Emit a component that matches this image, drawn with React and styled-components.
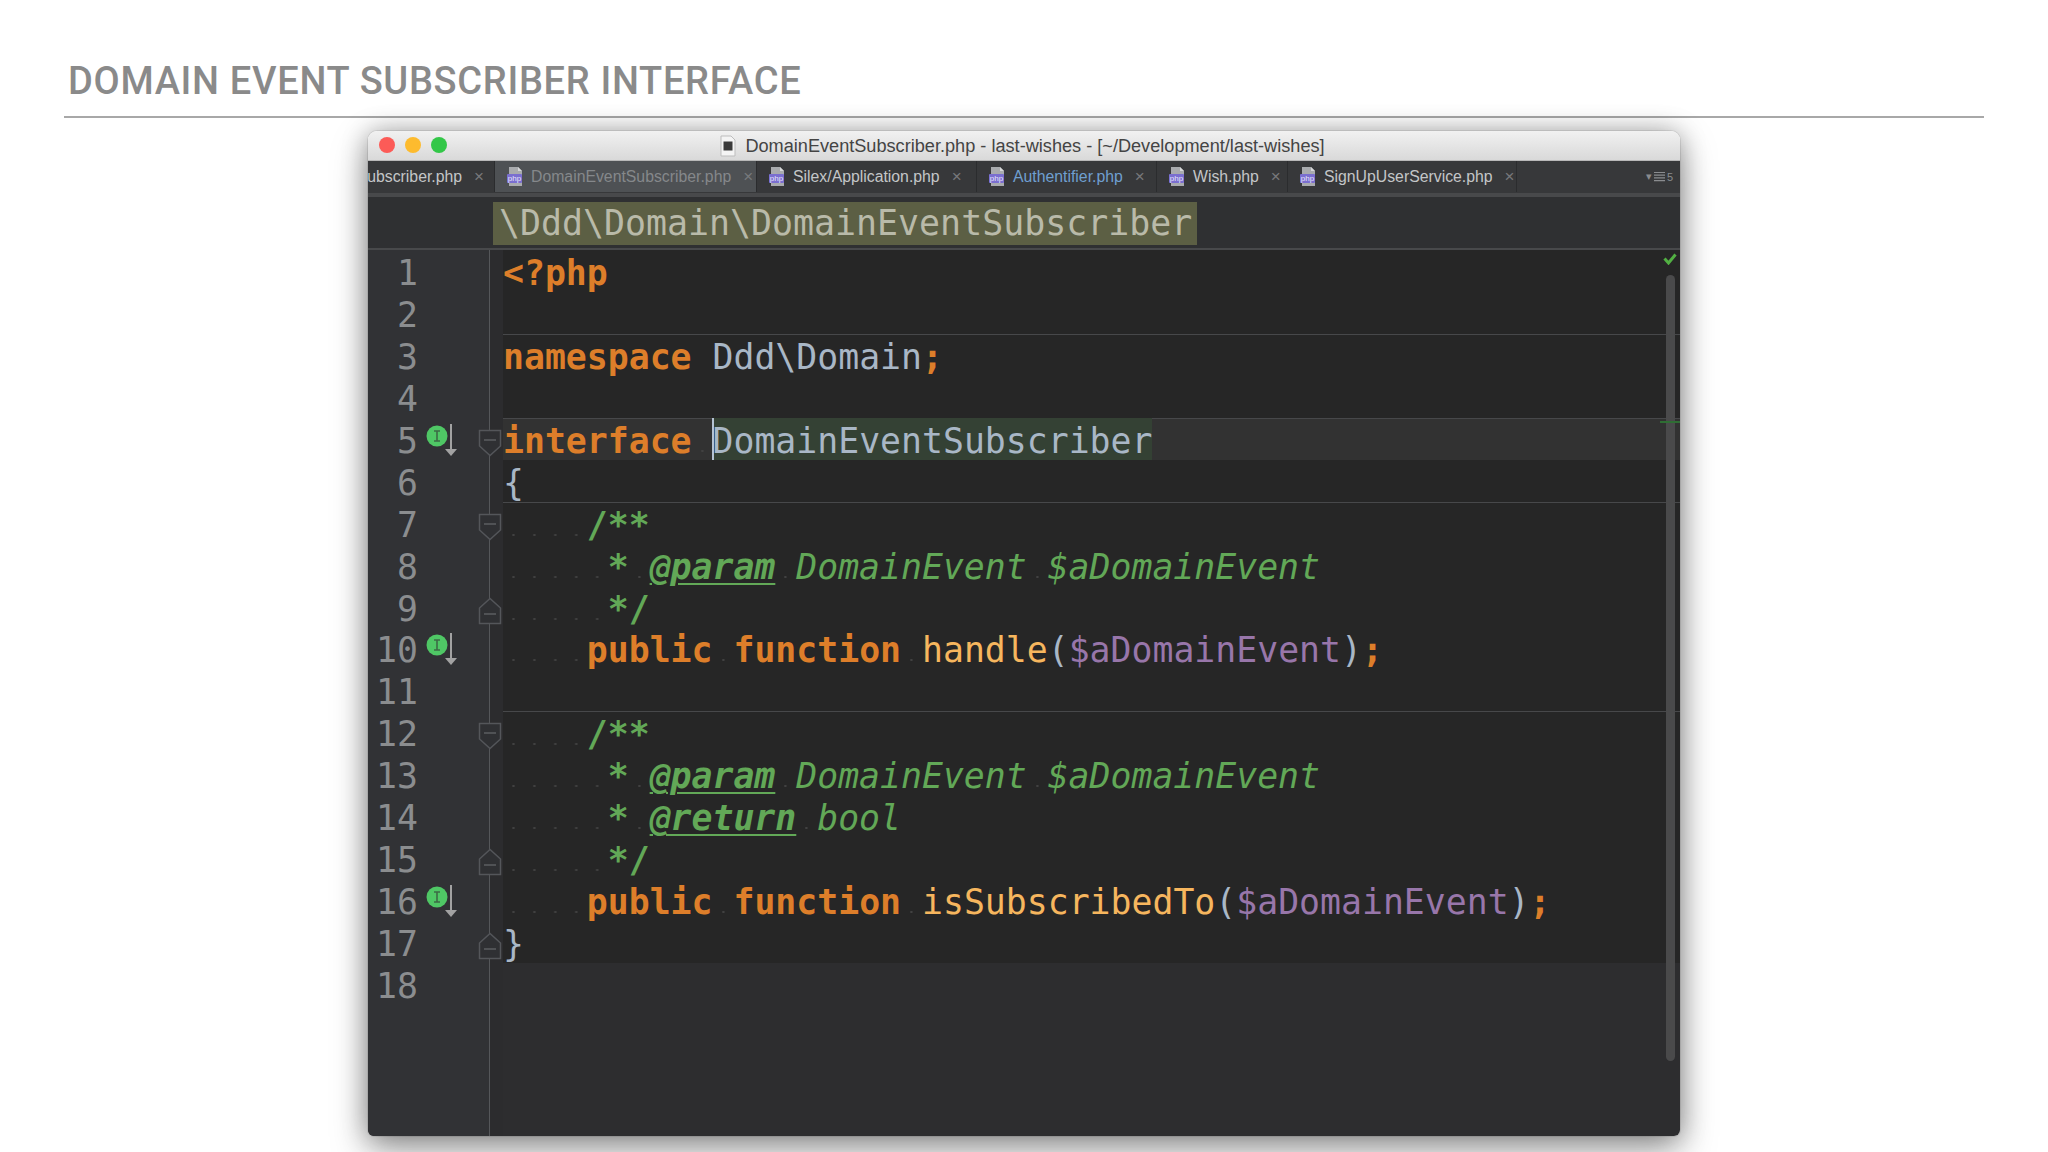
import React from 'react';
import styled, { createGlobalStyle } from 'styled-components';

const mono = `"DejaVu Sans Mono", "Liberation Mono", monospace`;
const ui = `"Liberation Sans", Arial, sans-serif`;

const GlobalStyle = createGlobalStyle`
  html, body {
    margin: 0;
    padding: 0;
    background: #fff;
    overflow: hidden;
  }
`;

const Page = styled.div`
  box-sizing: border-box;
  width: 2048px;
  height: 1152px;
  padding: 0 64px;
  overflow: hidden;
  background: #fff;
`;

const Heading = styled.h1`
  box-sizing: border-box;
  height: 118px;
  margin: 0;
  padding: 58px 0 0 4px;
  border-bottom: 2px solid #a8a8a8;
  font-family: Roboto, "Liberation Sans", sans-serif;
  font-size: 38px;
  line-height: 46px;
  font-weight: 500;
  letter-spacing: 0.7px;
  color: #8a8a8a;
`;

const Window = styled.div`
  display: flex;
  flex-direction: column;
  width: 1312px;
  height: 1005px;
  margin: 13px 0 0 304px;
  border-radius: 9px 9px 6px 6px;
  overflow: hidden;
  box-shadow: 0 0 0 1px rgba(0, 0, 0, 0.08), 0 0 26px rgba(0, 0, 0, 0.28), 0 14px 36px rgba(0, 0, 0, 0.36);
`;

const TitleBar = styled.div`
  position: relative;
  display: flex;
  align-items: center;
  justify-content: center;
  gap: 8px;
  flex: 0 0 30px;
  padding: 1px 4px 0 0;
  background: linear-gradient(#f1f1f1, #d9d9d9);
  border-bottom: 1px solid #b8b8b8;
  box-sizing: border-box;
  font-family: ${ui};
  font-size: 18.15px;
  color: #444444;
`;

const Lights = styled.div`
  position: absolute;
  left: 11px;
  top: 6px;
  display: flex;
  gap: 10px;
`;

const Light = styled.i`
  width: 16px;
  height: 16px;
  border-radius: 50%;
  background: ${(p) => p.$c};
`;

const TabBar = styled.div`
  display: flex;
  flex: 0 0 36px;
  box-sizing: border-box;
  padding-bottom: 1px;
  background: #37383a;
  border-bottom: 4px solid #48494b;
  font-family: ${ui};
  font-size: 15.8px;
`;

const Tab = styled.div`
  display: flex;
  align-items: center;
  justify-content: ${(p) => (p.$cut ? 'flex-end' : 'flex-start')};
  gap: 6px;
  flex: 0 0 ${(p) => p.$w}px;
  box-sizing: border-box;
  padding: 0 10px 0 11px;
  overflow: hidden;
  white-space: nowrap;
  background: ${(p) => (p.$active ? '#4e5154' : 'transparent')};
  border-right: 1px solid #2b2c2e;

  svg {
    flex: 0 0 auto;
  }
`;

const TabName = styled.span`
  color: ${(p) => (p.$active ? '#85888b' : p.$blue ? '#6f9fd0' : '#c4c6c8')};
`;

const TabClose = styled.span`
  margin-left: 6px;
  font-size: 17px;
  color: #77797c;
`;

const TabMore = styled.div`
  display: flex;
  align-items: center;
  gap: 2px;
  margin-left: auto;
  padding-right: 7px;
  font-size: 11px;
  color: #8a8c8f;
`;

const Crumbs = styled.div`
  display: flex;
  align-items: flex-start;
  flex: 0 0 53px;
  box-sizing: border-box;
  padding: 5px 0 0 125px;
  background: #2f3032;
  border-bottom: 2px solid #48494b;
`;

const CrumbMark = styled.div`
  height: 43px;
  padding: 0 5px 0 6px;
  background: #5c5f44;
  font-family: ${mono};
  font-size: 34.9px;
  line-height: 43px;
  color: #b9baa9;
`;

const Editor = styled.div`
  position: relative;
  display: flex;
  flex-direction: column;
  flex: 1;
  background: #2d2d2f;
  font-family: ${mono};
  font-size: 34.8px;
`;

const Row = styled.div`
  display: flex;
  flex: 0 0 41.94px;
  height: 41.94px;
`;

const Filler = styled.div`
  display: flex;
  flex: 1;
`;

const LineNo = styled.div`
  flex: 0 0 50px;
  box-sizing: border-box;
  background: #313235;
  line-height: 46px;
  text-align: right;
  color: #8b8d8f;
`;

const MarkerCell = styled.div`
  flex: 0 0 54px;
  box-sizing: border-box;
  padding: 5px 0 0 8px;
  background: #313235;
`;

const FoldCell = styled.div`
  position: relative;
  flex: 0 0 31px;
  background: linear-gradient(90deg, #313235 18px, #2c2c2e 18px);

  &::before {
    content: '';
    position: absolute;
    left: 17px;
    top: 0;
    bottom: 0;
    width: 1px;
    background: #55575a;
  }
`;

const FoldIcon = styled.svg`
  position: absolute;
  left: 6px;
  top: 11px;
`;

const Code = styled.div`
  flex: 1;
  box-sizing: border-box;
  white-space: pre;
  line-height: 46px;
  color: #a9b7c6;
  background: ${(p) => (p.$blank ? '#2d2d2f' : p.$active ? '#323232' : '#262626')};
  box-shadow: ${(p) => (p.$sep ? 'inset 0 1px 0 #47484a' : 'none')};
`;

const K = styled.span`
  font-weight: 700;
  color: #dd7e2a;
`;

const N = styled.span`
  color: #a9b7c6;
`;

const M = styled.span`
  color: #f6b65e;
`;

const V = styled.span`
  color: #9876aa;
`;

const C = styled.span`
  font-weight: 700;
  color: #62a857;
`;

const Ci = styled.span`
  font-style: italic;
  color: #62a857;
`;

const Tag = styled.span`
  font-style: italic;
  font-weight: 700;
  text-decoration: underline;
  text-underline-offset: 4px;
  text-decoration-thickness: 2px;
  color: #62a857;
`;

const Sp = styled.span`
  display: inline-block;
  width: ${(p) => p.$n}ch;
  height: 41.94px;
  vertical-align: top;
  background-image: radial-gradient(circle, #414141 1px, transparent 1.3px);
  background-size: 1ch 42px;
  background-position: 0 12px;
  background-repeat: repeat-x;
`;

const Current = styled.span`
  display: inline-block;
  height: 41.94px;
  vertical-align: top;
  background: #344134;
  box-shadow: inset 2px 0 0 #b4c2d2;
`;

const CheckMark = styled.svg`
  position: absolute;
  right: 3px;
  top: 3px;
`;

const Scrollbar = styled.div`
  position: absolute;
  right: 5px;
  top: 25px;
  width: 9px;
  height: 786px;
  border-radius: 5px;
  background: #4a4a4b;
`;

const ChangeMark = styled.div`
  position: absolute;
  right: 0;
  top: 171px;
  width: 20px;
  height: 2px;
  background: #2f6e34;
`;

const tabs = [
  { name: 'ubscriber.php', w: 127, cut: true },
  { name: 'DomainEventSubscriber.php', w: 262, active: true },
  { name: 'Silex/Application.php', w: 220 },
  { name: 'Authentifier.php', w: 180, blue: true },
  { name: 'Wish.php', w: 131 },
  { name: 'SignUpUserService.php', w: 229 },
];

const FileIcon = () => (
  <svg width="19" height="21" viewBox="0 0 19 21">
    <path d="M3 1h9l4 4v15H3z" fill="#a9abae" />
    <path d="M12 1v4h4" fill="#d5d6d8" />
    <rect x="1" y="8" width="15" height="9" rx="1" fill="#7a6fd0" />
    <text x="8.5" y="15" fontSize="8" fontFamily={ui} fill="#e8e6fa" textAnchor="middle">php</text>
  </svg>
);

const TitleIcon = () => (
  <svg width="18" height="22" viewBox="0 0 18 22">
    <path d="M2 1h10l4 4v16H2z" fill="#f4f4f4" stroke="#bdbdbd" />
    <rect x="4.5" y="6.5" width="9" height="9" fill="#3a3a3a" />
  </svg>
);

const Marker = () => (
  <svg width="32" height="34" viewBox="0 0 32 34">
    <circle cx="11" cy="13" r="10.5" fill="#4fc765" />
    <path d="M8 8h6M8 18h6M11 8v10" stroke="#3c6b45" strokeWidth="1.6" fill="none" />
    <path d="M25 1v26" stroke="#a2a2a2" strokeWidth="2" />
    <path d="M19 26h12l-6 7z" fill="#a2a2a2" />
  </svg>
);

const Fold = ({ up }) => (
  <FoldIcon width="24" height="28" viewBox="0 0 24 28">
    {up ? (
      <path d="M1.5 26.5V11L12 1.5 22.5 11v15.5z" fill="#2f3033" stroke="#54565a" strokeWidth="1.5" />
    ) : (
      <path d="M1.5 1.5V17L12 26.5 22.5 17V1.5z" fill="#2f3033" stroke="#54565a" strokeWidth="1.5" />
    )}
    <path d={up ? 'M6 17h12' : 'M6 11h12'} stroke="#5c5e62" strokeWidth="1.5" />
  </FoldIcon>
);

const paramLine = (
  <>
    <Sp $n={5} /><C>*</C><Sp $n={1} /><Tag>@param</Tag><Sp $n={1} /><Ci>DomainEvent</Ci><Sp $n={1} /><Ci>$aDomainEvent</Ci>
  </>
);

const lines = [
  { code: <K>{'<?php'}</K> },
  {},
  { sep: true, code: <><K>namespace</K><N> Ddd\Domain</N><K>;</K></> },
  {},
  {
    sep: true, active: true, marker: true, fold: 'down',
    code: <><K>interface</K><Sp $n={1} /><Current>DomainEventSubscriber</Current></>,
  },
  { code: <N>{'{'}</N> },
  { sep: true, fold: 'down', code: <><Sp $n={4} /><C>/**</C></> },
  { code: paramLine },
  { fold: 'up', code: <><Sp $n={5} /><C>*/</C></> },
  {
    marker: true,
    code: <><Sp $n={4} /><K>public</K><Sp $n={1} /><K>function</K><Sp $n={1} /><M>handle</M><N>(</N><V>$aDomainEvent</V><N>)</N><K>;</K></>,
  },
  {},
  { sep: true, fold: 'down', code: <><Sp $n={4} /><C>/**</C></> },
  { code: paramLine },
  { code: <><Sp $n={5} /><C>*</C><Sp $n={1} /><Tag>@return</Tag><Sp $n={1} /><Ci>bool</Ci></> },
  { fold: 'up', code: <><Sp $n={5} /><C>*/</C></> },
  {
    marker: true,
    code: <><Sp $n={4} /><K>public</K><Sp $n={1} /><K>function</K><Sp $n={1} /><M>isSubscribedTo</M><N>(</N><V>$aDomainEvent</V><N>)</N><K>;</K></>,
  },
  { fold: 'up', code: <N>{'}'}</N> },
  { blank: true },
];

const App = () => {
  return (
    <Page>
      <GlobalStyle />
      <Heading>DOMAIN EVENT SUBSCRIBER INTERFACE</Heading>
      <Window>
        <TitleBar>
          <Lights>
            <Light $c="#fc5b57" />
            <Light $c="#fdbb2e" />
            <Light $c="#33c748" />
          </Lights>
          <TitleIcon />
          <span>DomainEventSubscriber.php - last-wishes - [~/Development/last-wishes]</span>
        </TitleBar>
        <TabBar>
          {tabs.map((tab) => (
            <Tab key={tab.name} $w={tab.w} $active={tab.active} $cut={tab.cut}>
              {!tab.cut && <FileIcon />}
              <TabName $active={tab.active} $blue={tab.blue}>{tab.name}</TabName>
              <TabClose>×</TabClose>
            </Tab>
          ))}
          <TabMore>
            <span>▾</span>
            <svg width="11" height="11" viewBox="0 0 11 11">
              <path d="M0 1.5h11M0 4.2h11M0 6.9h11M0 9.6h11" stroke="#8a8c8f" strokeWidth="1.2" />
            </svg>
            <span>5</span>
          </TabMore>
        </TabBar>
        <Crumbs>
          <CrumbMark>\Ddd\Domain\DomainEventSubscriber</CrumbMark>
        </Crumbs>
        <Editor>
          {lines.map((line, i) => (
            <Row key={i}>
              <LineNo>{i + 1}</LineNo>
              <MarkerCell>{line.marker && <Marker />}</MarkerCell>
              <FoldCell>{line.fold && <Fold up={line.fold === 'up'} />}</FoldCell>
              <Code $sep={line.sep} $active={line.active} $blank={line.blank}>{line.code}</Code>
            </Row>
          ))}
          <Filler>
            <LineNo />
            <MarkerCell />
            <FoldCell />
          </Filler>
          <CheckMark viewBox="0 0 14 12" width="14" height="12">
            <path d="M1.5 5.5L5.5 10 12.5 1.5" stroke="#52b043" strokeWidth="3" fill="none" />
          </CheckMark>
          <Scrollbar />
          <ChangeMark />
        </Editor>
      </Window>
    </Page>
  );
};

export default App;
